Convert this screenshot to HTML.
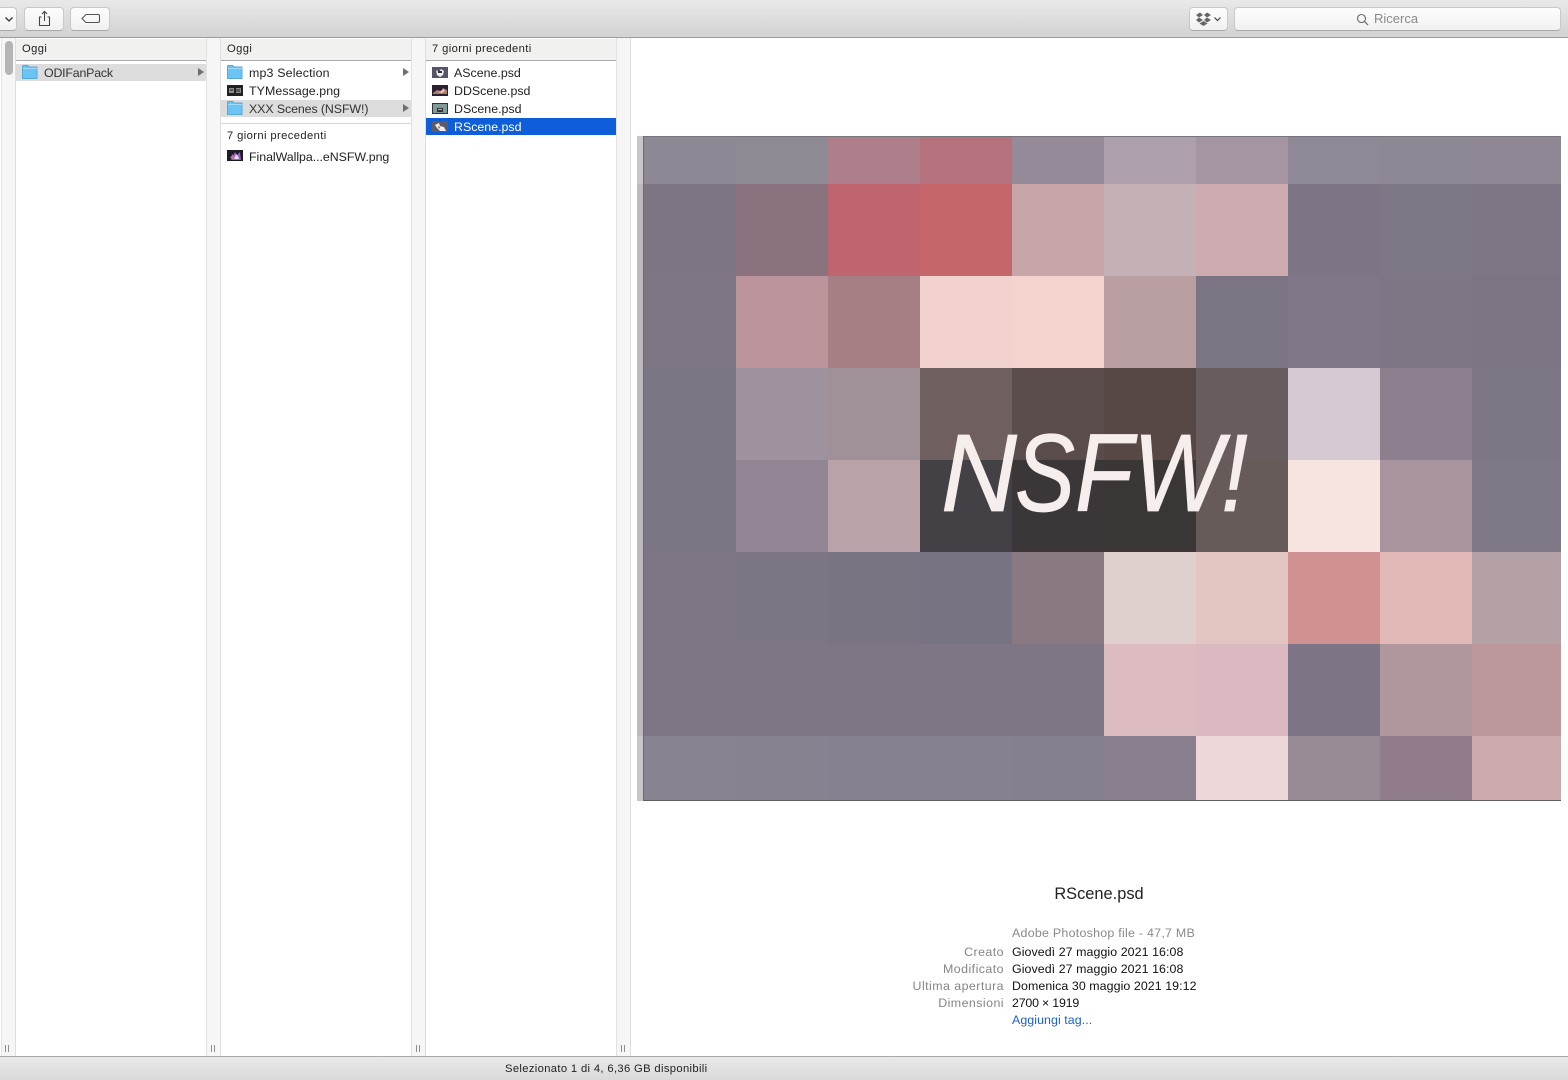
<!DOCTYPE html>
<html><head><meta charset="utf-8"><style>
html,body{margin:0;padding:0;width:1568px;height:1080px;overflow:hidden;background:#fff;font-family:"Liberation Sans",sans-serif;color:#1a1a1a}
.a{position:absolute}
.t{position:absolute;font-size:12.4px;line-height:18px;height:18px;white-space:nowrap;color:#222}
.hd{position:absolute;top:39px;background:#f1f1f0;border-bottom:1.5px solid #a9a9a9;font-size:11.2px;letter-spacing:.4px;line-height:21px;padding-left:6px;box-sizing:border-box;height:22px;color:#222}
.strip{position:absolute;top:38px;height:1018px;background:#f6f6f6;border-left:1px solid #e2e2e2;border-right:1px solid #dedede;box-sizing:border-box}
.hnd{position:absolute;top:1045px;height:7px;border-left:1px solid #8f8f8f;border-right:1px solid #8f8f8f;width:2px}
.btn{position:absolute;top:7px;height:24px;box-sizing:border-box;border-radius:4px;background:linear-gradient(#fdfdfd,#f1f1f1);border:1px solid #c8c8c8;border-bottom-color:#aaa}
.arr{position:absolute;width:0;height:0;border-left:6px solid #6f6f6f;border-top:4px solid transparent;border-bottom:4px solid transparent}
.l{position:absolute;text-align:right;width:120px;left:884px;font-size:12.4px;letter-spacing:.45px;line-height:17px;color:#85858a;white-space:nowrap}
.v{position:absolute;left:1012px;font-size:12.4px;letter-spacing:.07px;line-height:17px;color:#111;white-space:nowrap}
.th{position:absolute}
</style></head><body>
<!-- toolbar -->
<div class="a" style="left:0;top:0;width:1568px;height:38px;background:linear-gradient(#e9e9e9,#d2d2d2);border-bottom:1px solid #9d9d9d;box-sizing:border-box"></div>
<div class="btn" style="left:-10px;width:27px"></div>
<svg class="a" style="left:4px;top:16px" width="10" height="7"><path d="M1.500 1.500L5 5l3.500-3.500" fill="none" stroke="#333" stroke-width="1.300"/></svg>
<div class="btn" style="left:24px;width:40px"></div>
<svg class="a" style="left:38px;top:10px" width="14" height="17"><path d="M3.500 7H1.500v8.500h10V7h-2M6.500 11V1.500M3.900 4L6.500 1.400 9.100 4" fill="none" stroke="#444" stroke-width="1.100"/></svg>
<div class="btn" style="left:70px;width:40px"></div>
<svg class="a" style="left:81px;top:13px" width="20" height="12"><path d="M5 1.500h12a1.500 1.500 0 0 1 1.500 1.500v5a1.500 1.500 0 0 1-1.500 1.500H5L1 5.500z" fill="none" stroke="#555" stroke-width="1.100"/></svg>
<div class="btn" style="left:1189px;width:39px"></div>
<svg class="a" style="left:1195px;top:12px" width="28" height="15"><g fill="#666"><path d="M1 3l4-2.500 3 2.500-4 2.500zM9 3l3-2.500 4 2.500-4 2.500zM1 8l3-2.500 4 2.500-4 2.500zM12 5.500l4 2.500-4 2.500-3-2.500zM4.500 11.500l4-2.500 4 2.500-4 2.500z"/></g><path d="M19.500 5.500L22.500 8.500l3-3" fill="none" stroke="#444" stroke-width="1.200"/></svg>
<div class="btn" style="left:1234px;width:327px"></div>
<svg class="a" style="left:1356px;top:13px" width="13" height="13"><circle cx="5.500" cy="5.500" r="4" fill="none" stroke="#666" stroke-width="1.100"/><path d="M8.500 8.500l3.500 3.500" stroke="#666" stroke-width="1.200"/></svg>
<div class="a" style="left:1374px;top:10px;font-size:13px;line-height:18px;color:#8a8a8a">Ricerca</div>

<!-- left strip -->
<div class="a" style="left:0;top:38px;width:1px;height:1018px;background:#fff"></div>
<div class="strip" style="left:1px;width:15px;border-left:1px solid #e4e4e4"></div>
<div class="a" style="left:5px;top:41px;width:8px;height:34px;border-radius:4px;background:#b5b5b5"></div>

<!-- column 1 -->
<div class="hd" style="left:16px;width:190px">Oggi</div>
<div class="a" style="left:16px;top:64px;width:190px;height:17px;background:#dcdcdc"></div>
<svg class="a" style="left:22px;top:65px" width="16" height="14"><path d="M.5 13.500V1.200q0-.7.7-.7h4.500l1.300 1.500h8v11.500z" fill="#6cc4f5" stroke="#57a9da"/><path d="M1 3.500h14" stroke="#a2dcfb"/></svg>
<div class="t" style="left:44px;top:64px;color:#333;letter-spacing:-.2px">ODIFanPack</div>
<div class="arr" style="left:198px;top:68px"></div>
<div class="strip" style="left:206px;width:15px"></div>

<!-- column 2 -->
<div class="hd" style="left:221px;width:190px">Oggi</div>
<svg class="a" style="left:227px;top:65px" width="16" height="14"><path d="M.5 13.500V1.200q0-.7.7-.7h4.500l1.300 1.500h8v11.500z" fill="#6cc4f5" stroke="#57a9da"/><path d="M1 3.500h14" stroke="#a2dcfb"/></svg>
<div class="t" style="left:249px;top:64px;letter-spacing:.17px">mp3 Selection</div>
<div class="arr" style="left:403px;top:68px"></div>
<svg class="th" style="left:227px;top:85px" width="16" height="11"><rect width="16" height="11" fill="#222"/><path d="M2 3h5v5H2zM9 3h5v5H9z" fill="#8c8c8c"/><path d="M3 5h3M10 4v3M12 4v3" stroke="#222"/></svg>
<div class="t" style="left:249px;top:82px;letter-spacing:.07px">TYMessage.png</div>
<div class="a" style="left:221px;top:100px;width:190px;height:17px;background:#dcdcdc"></div>
<svg class="a" style="left:227px;top:101px" width="16" height="14"><path d="M.5 13.500V1.200q0-.7.7-.7h4.500l1.300 1.500h8v11.500z" fill="#6cc4f5" stroke="#57a9da"/><path d="M1 3.500h14" stroke="#a2dcfb"/></svg>
<div class="t" style="left:249px;top:100px;color:#333;letter-spacing:-.1px">XXX Scenes (NSFW!)</div>
<div class="arr" style="left:403px;top:104px"></div>
<div class="a" style="left:221px;top:123px;width:190px;height:1px;background:#d5d5d5"></div>
<div class="a" style="left:227px;top:127px;font-size:11.2px;letter-spacing:.4px;line-height:18px;color:#222">7 giorni precedenti</div>
<svg class="th" style="left:227px;top:150px" width="16" height="11"><rect width="16" height="11" fill="#1c1c24"/><path d="M4 10L8 2l2 3 3-3 1 8z" fill="#9a5cc0"/><path d="M7 9l2-5 2 2 1 3z" fill="#e4d8e4"/><path d="M3 8l3-4 1 5z" fill="#d070a0"/></svg>
<div class="t" style="left:249px;top:148px;letter-spacing:-.05px">FinalWallpa...eNSFW.png</div>
<div class="strip" style="left:411px;width:15px"></div>

<!-- column 3 -->
<div class="hd" style="left:426px;width:190px">7 giorni precedenti</div>
<svg class="th" style="left:432px;top:67px" width="16" height="11"><rect width="16" height="11" fill="#55556a"/><path d="M4 3l3 2 2-3 3 2-1 4-3 2-3-2z" fill="#eee"/><path d="M6 4h4v2H6z" fill="#333"/></svg>
<div class="t" style="left:454px;top:64px">AScene.psd</div>
<svg class="th" style="left:432px;top:85px" width="16" height="11"><rect width="16" height="11" fill="#2a2030"/><path d="M1 8l4-3 4 1 2-3 4 2v4H1z" fill="#b07a70"/><path d="M6 7l3-1 2-2 2 2-3 2z" fill="#e8c8a8"/></svg>
<div class="t" style="left:454px;top:82px">DDScene.psd</div>
<svg class="th" style="left:432px;top:103px" width="16" height="11"><rect width="16" height="11" fill="#7f9a9a"/><rect x=".5" y=".5" width="15" height="10" fill="none" stroke="#333"/><path d="M5 5h6v4H5z" fill="#333"/><path d="M6 6h4v1H6z" fill="#bbb"/></svg>
<div class="t" style="left:454px;top:100px">DScene.psd</div>
<div class="a" style="left:426px;top:118px;width:190px;height:17px;background:#0d5ed8"></div>
<svg class="th" style="left:432px;top:121px" width="16" height="11"><rect width="16" height="11" fill="#5d5a68"/><path d="M3 4l4-2 1 3 4 1 2 4H8L5 7z" fill="#eee"/><path d="M6 5l2 1-1 2z" fill="#a33"/></svg>
<div class="t" style="left:454px;top:118px;color:#fff">RScene.psd</div>
<div class="strip" style="left:616px;width:15px"></div>

<div class="hnd" style="left:5px"></div><div class="hnd" style="left:211px"></div><div class="hnd" style="left:416px"></div><div class="hnd" style="left:621px"></div>

<!-- preview -->
<svg class="a" style="left:637px;top:136px" width="925" height="666" viewBox="637 136 925 666" shape-rendering="crispEdges">
<rect x="637" y="136" width="7" height="665" fill="#c9c5ca"/>
<rect x="637" y="184" width="7" height="552" fill="#bdb9bf"/>
<g><rect x="644" y="136" width="92" height="48" fill="#8e8894"/><rect x="736" y="136" width="92" height="48" fill="#8d8a94"/><rect x="828" y="136" width="92" height="48" fill="#ae7f8a"/><rect x="920" y="136" width="92" height="48" fill="#b5727c"/><rect x="1012" y="136" width="92" height="48" fill="#948a98"/><rect x="1104" y="136" width="92" height="48" fill="#ad9fac"/><rect x="1196" y="136" width="92" height="48" fill="#a595a3"/><rect x="1288" y="136" width="92" height="48" fill="#8f8896"/><rect x="1380" y="136" width="92" height="48" fill="#8e8895"/><rect x="1472" y="136" width="89" height="48" fill="#8f8894"/></g>
<g><rect x="644" y="184" width="92" height="92" fill="#7e7582"/><rect x="736" y="184" width="92" height="92" fill="#8a727e"/><rect x="828" y="184" width="92" height="92" fill="#c0646f"/><rect x="920" y="184" width="92" height="92" fill="#c5666a"/><rect x="1012" y="184" width="92" height="92" fill="#c7a6a9"/><rect x="1104" y="184" width="92" height="92" fill="#c4b0b5"/><rect x="1196" y="184" width="92" height="92" fill="#ccabb1"/><rect x="1288" y="184" width="92" height="92" fill="#7d7585"/><rect x="1380" y="184" width="92" height="92" fill="#7e7785"/><rect x="1472" y="184" width="89" height="92" fill="#7e7684"/></g>
<g><rect x="644" y="276" width="92" height="92" fill="#7e7682"/><rect x="736" y="276" width="92" height="92" fill="#bb959b"/><rect x="828" y="276" width="92" height="92" fill="#a67f84"/><rect x="920" y="276" width="92" height="92" fill="#f2d2cf"/><rect x="1012" y="276" width="92" height="92" fill="#f4d3cf"/><rect x="1104" y="276" width="92" height="92" fill="#b99fa2"/><rect x="1196" y="276" width="92" height="92" fill="#7a7483"/><rect x="1288" y="276" width="92" height="92" fill="#807888"/><rect x="1380" y="276" width="92" height="92" fill="#7e7684"/><rect x="1472" y="276" width="89" height="92" fill="#7c7482"/></g>
<g><rect x="644" y="368" width="92" height="92" fill="#7c7684"/><rect x="736" y="368" width="92" height="92" fill="#9e929e"/><rect x="828" y="368" width="92" height="92" fill="#a09098"/><rect x="920" y="368" width="92" height="92" fill="#6f5f5f"/><rect x="1012" y="368" width="92" height="92" fill="#594c4a"/><rect x="1104" y="368" width="92" height="92" fill="#574745"/><rect x="1196" y="368" width="92" height="92" fill="#695c5e"/><rect x="1288" y="368" width="92" height="92" fill="#d5cad3"/><rect x="1380" y="368" width="92" height="92" fill="#8e7f8e"/><rect x="1472" y="368" width="89" height="92" fill="#7d7685"/></g>
<g><rect x="644" y="460" width="92" height="92" fill="#7c7684"/><rect x="736" y="460" width="92" height="92" fill="#928694"/><rect x="828" y="460" width="92" height="92" fill="#b9a2a8"/><rect x="920" y="460" width="92" height="92" fill="#434046"/><rect x="1012" y="460" width="92" height="92" fill="#3b3739"/><rect x="1104" y="460" width="92" height="92" fill="#3a3636"/><rect x="1196" y="460" width="92" height="92" fill="#665b59"/><rect x="1288" y="460" width="92" height="92" fill="#f7e4e1"/><rect x="1380" y="460" width="92" height="92" fill="#a8949f"/><rect x="1472" y="460" width="89" height="92" fill="#7f7887"/></g>
<g><rect x="644" y="552" width="92" height="92" fill="#7f7685"/><rect x="736" y="552" width="92" height="92" fill="#7c7583"/><rect x="828" y="552" width="92" height="92" fill="#7a7381"/><rect x="920" y="552" width="92" height="92" fill="#777382"/><rect x="1012" y="552" width="92" height="92" fill="#8a7882"/><rect x="1104" y="552" width="92" height="92" fill="#dfd0cd"/><rect x="1196" y="552" width="92" height="92" fill="#e3c5c2"/><rect x="1288" y="552" width="92" height="92" fill="#d09291"/><rect x="1380" y="552" width="92" height="92" fill="#e1b9b6"/><rect x="1472" y="552" width="89" height="92" fill="#b3a1a6"/></g>
<g><rect x="644" y="644" width="92" height="92" fill="#7e7684"/><rect x="736" y="644" width="92" height="92" fill="#7e7684"/><rect x="828" y="644" width="92" height="92" fill="#7e7585"/><rect x="920" y="644" width="92" height="92" fill="#7e7585"/><rect x="1012" y="644" width="92" height="92" fill="#7e7585"/><rect x="1104" y="644" width="92" height="92" fill="#dcbcc1"/><rect x="1196" y="644" width="92" height="92" fill="#dabac0"/><rect x="1288" y="644" width="92" height="92" fill="#7d7485"/><rect x="1380" y="644" width="92" height="92" fill="#b0979d"/><rect x="1472" y="644" width="89" height="92" fill="#bc979b"/></g>
<g><rect x="644" y="736" width="92" height="65" fill="#898290"/><rect x="736" y="736" width="92" height="65" fill="#888190"/><rect x="828" y="736" width="92" height="65" fill="#878090"/><rect x="920" y="736" width="92" height="65" fill="#878090"/><rect x="1012" y="736" width="92" height="65" fill="#858090"/><rect x="1104" y="736" width="92" height="65" fill="#8a7f8e"/><rect x="1196" y="736" width="92" height="65" fill="#edd7d8"/><rect x="1288" y="736" width="92" height="65" fill="#988b96"/><rect x="1380" y="736" width="92" height="65" fill="#907c8a"/><rect x="1472" y="736" width="89" height="65" fill="#cba9ac"/></g>
<rect x="643" y="136" width="1" height="665" fill="#6d6a72"/>
<rect x="644" y="136" width="917" height="1" fill="#77747c"/>
<rect x="644" y="800" width="917" height="1" fill="#5f5c62"/>
<g font-family="Liberation Sans" font-style="italic" font-size="110" fill="#f5eeec" stroke="#f5eeec" stroke-width=".8" shape-rendering="auto">
<text x="941" y="511" textLength="76" lengthAdjust="spacingAndGlyphs">N</text>
<text x="1015" y="511" textLength="60" lengthAdjust="spacingAndGlyphs">S</text>
<text x="1075" y="511" textLength="58" lengthAdjust="spacingAndGlyphs">F</text>
<text x="1133" y="511" textLength="90" lengthAdjust="spacingAndGlyphs">W</text>
<text x="1221" y="511" textLength="27" lengthAdjust="spacingAndGlyphs">!</text>
</g>
</svg>

<!-- info -->
<div class="a" style="left:899px;width:400px;top:885px;text-align:center;font-size:16.4px;line-height:19px;color:#222">RScene.psd</div>
<div class="v" style="top:925px;color:#8a8a8e;letter-spacing:.27px">Adobe Photoshop file - 47,7 MB</div>
<div class="l" style="top:944px">Creato</div><div class="v" style="top:944px">Giovedì 27 maggio 2021 16:08</div>
<div class="l" style="top:961px">Modificato</div><div class="v" style="top:961px">Giovedì 27 maggio 2021 16:08</div>
<div class="l" style="top:978px">Ultima apertura</div><div class="v" style="top:978px">Domenica 30 maggio 2021 19:12</div>
<div class="l" style="top:995px">Dimensioni</div><div class="v" style="top:995px;letter-spacing:-.2px">2700 × 1919</div>
<div class="v" style="top:1012px;color:#1c62cf">Aggiungi tag...</div>

<!-- status bar -->
<div class="a" style="left:0;top:1056px;width:1568px;height:24px;background:linear-gradient(#e9e9e9,#d9d9d9);border-top:1px solid #a8a8a8;box-sizing:border-box"></div>
<div class="a" style="left:505px;top:1061px;font-size:11.2px;letter-spacing:.36px;line-height:16px;color:#222">Selezionato 1 di 4, 6,36 GB disponibili</div>
</body></html>
